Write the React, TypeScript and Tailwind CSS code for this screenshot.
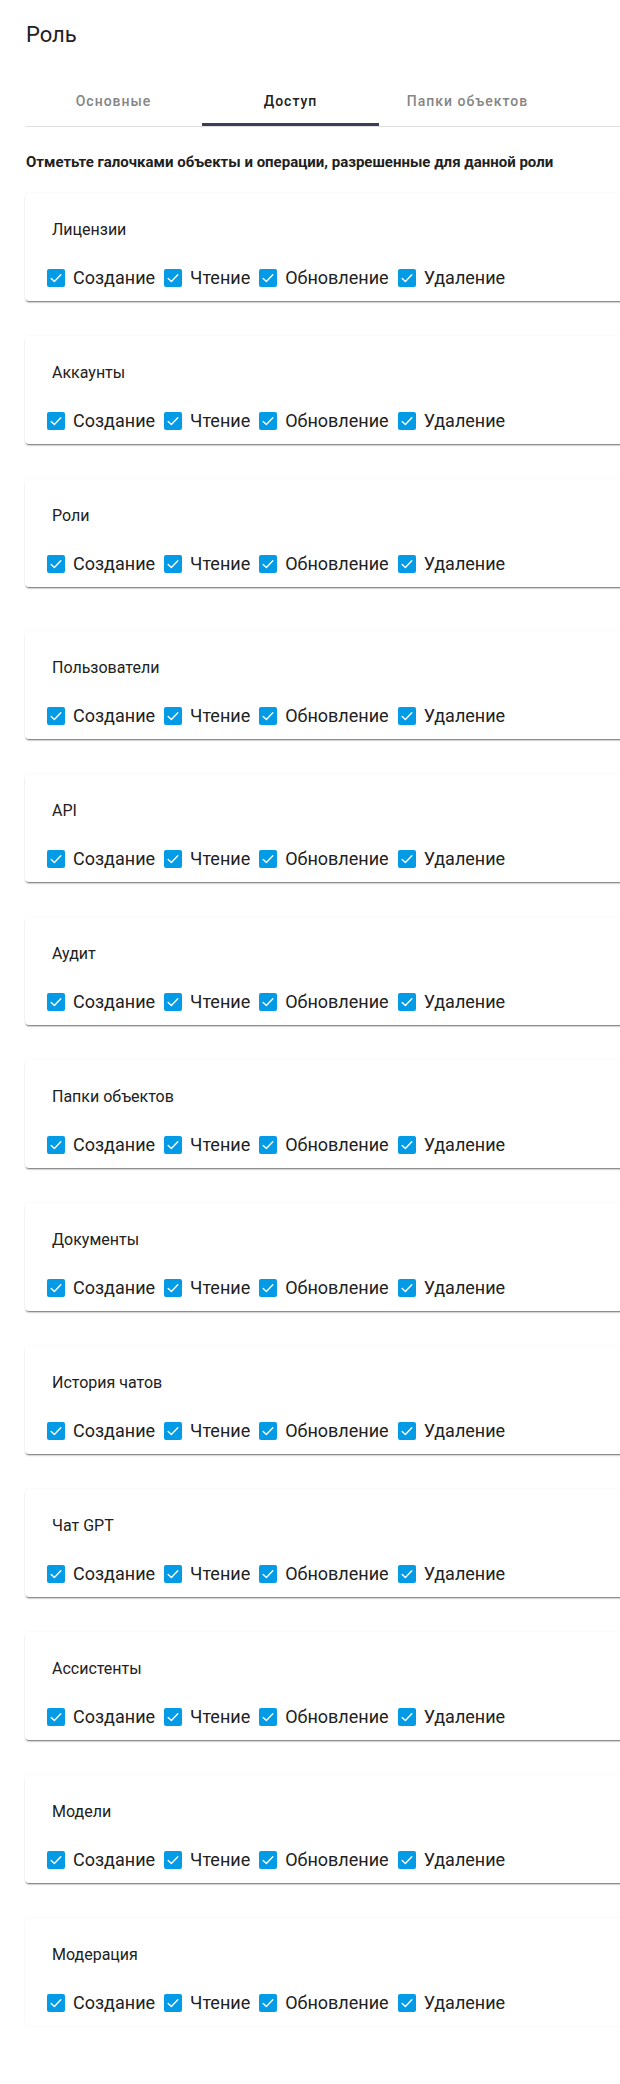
import React from "react";

const objects = [
  "Лицензии",
  "Аккаунты",
  "Роли",
  "Пользователи",
  "API",
  "Аудит",
  "Папки объектов",
  "Документы",
  "История чатов",
  "Чат GPT",
  "Ассистенты",
  "Модели",
  "Модерация",
];

const ops = ["Создание", "Чтение", "Обновление", "Удаление"];

function Check() {
  return (
    <span className="flex h-[18px] w-[18px] shrink-0 items-center justify-center rounded-[2px] bg-[#039be5]">
      <svg width="18" height="18" viewBox="0 0 18 18" fill="none">
        <path d="M4.2 9.4 L7.4 12.5 L13.8 5.8" stroke="white" strokeWidth="1.4" strokeLinecap="round" strokeLinejoin="round" />
      </svg>
    </span>
  );
}

function Card({ name, last, extra }: { name: string; last?: boolean; extra?: boolean }) {
  return (
    <div
      className={
        "h-[108px] w-[640px] rounded-[4px] bg-white pl-[22px] pt-[25px] " +
        (extra ? "mt-[9px] " : "") +
        (last
          ? "shadow-[0_0_2px_rgba(0,0,0,0.08)]"
          : "shadow-[0_2px_2px_-1px_rgba(0,0,0,0.6),0_0_2px_rgba(0,0,0,0.07)]")
      }
    >
      <div className="pl-[5px] text-[16px] leading-[24px] text-[#212121]">{name}</div>
      <div className="mt-[24px] flex h-[24px] items-center gap-[9px]">
        {ops.map((o) => (
          <label key={o} className="flex items-center gap-[8px]">
            <Check />
            <span className="text-[18px] leading-[24px] text-[#212121]">{o}</span>
          </label>
        ))}
      </div>
    </div>
  );
}

export default function App() {
  const tabs = ["Основные", "Доступ", "Папки объектов"];
  return (
    <div className="min-h-[2084px] w-[620px] overflow-hidden bg-white font-['Roboto',sans-serif] text-[#212121]">
      <div className="w-[680px] pl-[25px]">
        <h1 className="pl-[1px] pt-[21px] text-[22px] font-normal leading-[28px] text-[#212121]">Роль</h1>
        <div className="mt-[28px] flex border-b border-[#e0e0e0]">
          {tabs.map((t, i) => (
            <div
              key={t}
              className={
                "relative flex h-[49px] w-[177px] items-center justify-center text-[14px] font-medium tracking-[1px] " +
                (i === 1 ? "text-[#212121]" : "text-[#858585]")
              }
            >
              {t}
              {i === 1 && <span className="absolute bottom-0 left-0 right-0 h-[3px] bg-[#3a3e56]" />}
            </div>
          ))}
        </div>
        <p className="mt-[25px] pl-[1px] text-[15px] font-bold leading-[20px] text-[#212121]">
          Отметьте галочками объекты и операции, разрешенные для данной роли
        </p>
        <div className="mt-[21px] flex flex-col gap-[35px]">
          {objects.map((o, i) => (
            <Card key={o} name={o} last={i === objects.length - 1} extra={i === 3} />
          ))}
        </div>
      </div>
    </div>
  );
}
